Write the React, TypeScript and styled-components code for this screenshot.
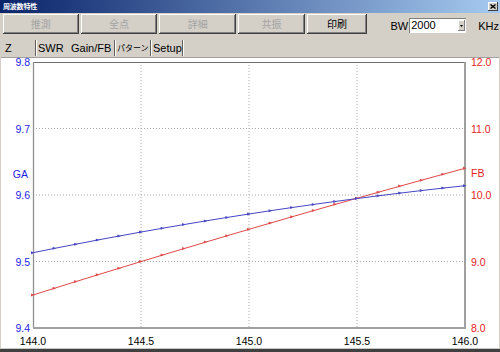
import React from 'react';
import styled, { createGlobalStyle } from 'styled-components';

const Global = createGlobalStyle`
  html, body { margin: 0; padding: 0; background: #d4d0c8; }
  body {
    width: 500px; height: 352px; overflow: hidden;
    font-family: "Liberation Sans", Arial, sans-serif;
  }
`;

const Window = styled.div`
  width: 500px;
  height: 352px;
  box-sizing: border-box;
  display: flex;
  flex-direction: column;
  background: #d4d0c8;
  border-bottom: 3px solid #404040;
  overflow: hidden;
`;

const TitleBar = styled.div`
  height: 13px;
  flex: none;
  display: flex;
  align-items: center;
  justify-content: space-between;
  padding: 0 2px 0 3px;
  background: linear-gradient(to right, #0a246a, #a6caf0);
`;

const Title = styled.span`
  color: #fff;
  font: bold 7px/1 "Noto Sans CJK JP", sans-serif;
  letter-spacing: -0.2px;
`;

const CloseButton = styled.div`
  width: 10px;
  height: 9px;
  display: flex;
  align-items: center;
  justify-content: center;
  background: #d4d0c8;
  box-shadow: inset -1px -1px #404040, inset 1px 1px #fff;
`;

const Toolbar = styled.div`
  height: 25px;
  flex: none;
  display: flex;
  align-items: flex-start;
  gap: 2px;
  padding: 1px 0 0 3px;
  box-sizing: border-box;
`;

const ToolButton = styled.div<{ $w: number; $disabled?: boolean }>`
  width: ${(p) => p.$w}px;
  height: 20px;
  box-sizing: border-box;
  display: flex;
  align-items: center;
  justify-content: center;
  background: #d4d0c8;
  box-shadow: inset -1px -1px #404040, inset 1px 1px #fff, inset -2px -2px #808080;
  font: 10px/1 "Noto Sans CJK JP", sans-serif;
  color: ${(p) => (p.$disabled ? '#a4a4a4' : '#000')};
`;

const BwGroup = styled.div`
  margin-left: 21px;
  margin-top: 4px;
  display: flex;
  align-items: center;
  height: 15px;
`;

const FieldLabel = styled.span<{ $ml?: number }>`
  font-size: 11px;
  color: #000;
  margin-left: ${(p) => p.$ml ?? 0}px;
  margin-right: 1px;
`;

const Combo = styled.div`
  width: 58px;
  height: 15px;
  box-sizing: border-box;
  display: flex;
  background: #fff;
  box-shadow: inset 1px 1px #808080, inset -1px -1px #fff;
  border-right: 1px solid #d4d0c8;
`;

const ComboText = styled.span`
  flex: 1;
  font-size: 11px;
  line-height: 15px;
  padding-left: 2px;
`;

const ComboArrow = styled.div`
  width: 7px;
  margin: 2px 1px 2px 0;
  display: flex;
  align-items: center;
  justify-content: center;
  background: #d4d0c8;
  box-shadow: inset -1px -1px #808080, inset 1px 1px #fff;
`;

const TabRow = styled.div`
  height: 16px;
  flex: none;
  margin-top: 2px;
  display: flex;
  padding-left: 3px;
`;

const Tab = styled.div<{ $w: number; $sep?: boolean; $jp?: boolean }>`
  width: ${(p) => p.$w}px;
  box-sizing: border-box;
  padding: 0 0 0 2px;
  height: 16px;
  line-height: 16px;
  font-size: ${(p) => (p.$jp ? '8px' : '11px')};
  font-family: ${(p) =>
    p.$jp ? '"Noto Sans CJK JP", sans-serif' : '"Liberation Sans", Arial, sans-serif'};
  color: #000;
  white-space: nowrap;
  border-right: 1px solid ${(p) => (p.$sep ? '#606060' : 'transparent')};
  box-shadow: ${(p) => (p.$sep ? '1px 0 #fff' : 'none')};
`;

const Panel = styled.div`
  flex: 1;
  margin: 1px 1px 0;
  background: #fff;
  border-top: 1px solid #a0a0a0;
  border-bottom: 1px solid #c8c8c8;
  overflow: visible;
`;

const ChartSvg = styled.svg`
  display: block;
  overflow: visible;
  font-family: "Liberation Sans", Arial, sans-serif;
  font-size: 10.5px;
`;

const X0 = 33;
const X1 = 465;
const Y0 = 62;
const Y1 = 328;

const N = 20;
const pts = Array.from({ length: N + 1 }, (_, i) => {
  const t = i / N;
  return {
    x: X0 + (X1 - X0) * t,
    blue: 252.7 - 87.8 * t + 20.8 * t * t,
    red: 295 - 136 * t + 9.3 * t * t,
  };
});

const gridY = [128.5, 195, 261.5];
const gridX = [141, 249, 357];

const leftLabels = [
  { y: 62, t: '9.8' },
  { y: 128.5, t: '9.7' },
  { y: 195, t: '9.6' },
  { y: 261.5, t: '9.5' },
  { y: 328, t: '9.4' },
];
const rightLabels = [
  { y: 62, t: '12.0' },
  { y: 128.5, t: '11.0' },
  { y: 195, t: '10.0' },
  { y: 261.5, t: '9.0' },
  { y: 328, t: '8.0' },
];
const bottomLabels = [
  { x: 33, t: '144.0' },
  { x: 141, t: '144.5' },
  { x: 249, t: '145.0' },
  { x: 357, t: '145.5' },
  { x: 465, t: '146.0' },
];

function Marker({ x, y, color }: { x: number; y: number; color: string }) {
  return (
    <polygon
      points={`${x - 2},${y - 1.5} ${x + 1.5},${y} ${x - 2},${y + 1.5}`}
      fill={color}
    />
  );
}

function Chart() {
  const blue = '#4646c4';
  const red = '#e04848';
  return (
    <ChartSvg width={498} height={290} viewBox="1 58 498 290">
      {gridY.map((y) => (
        <line key={'gy' + y} x1={X0} x2={X1} y1={y} y2={y} stroke="#a8a8a8" strokeDasharray="1 2" />
      ))}
      {gridX.map((x) => (
        <line key={'gx' + x} x1={x} x2={x} y1={Y0} y2={Y1} stroke="#a8a8a8" strokeDasharray="1 2" />
      ))}
      <line x1={X0} x2={X1} y1={Y0 + 0.5} y2={Y0 + 0.5} stroke="#707070" />
      <line x1={X0 + 0.5} x2={X0 + 0.5} y1={Y0} y2={Y1} stroke="#909090" strokeWidth={1.3} />
      <line x1={X1} x2={X1} y1={Y0} y2={Y1 + 1} stroke="#a0a0a0" strokeWidth={2} />
      <line x1={X0} x2={X1 + 1} y1={Y1} y2={Y1} stroke="#a0a0a0" strokeWidth={2} />

      <polyline points={pts.map((p) => `${p.x},${p.red}`).join(' ')} fill="none" stroke={red} strokeWidth={1} />
      <polyline points={pts.map((p) => `${p.x},${p.blue}`).join(' ')} fill="none" stroke={blue} strokeWidth={1} />
      {pts.map((p, i) => (
        <Marker key={'r' + i} x={p.x} y={p.red} color={red} />
      ))}
      {pts.map((p, i) => (
        <Marker key={'b' + i} x={p.x} y={p.blue} color={blue} />
      ))}

      {leftLabels.map((l) => (
        <text key={'l' + l.t} x={30} y={l.y + 4} textAnchor="end" fill="#1e1ee6">
          {l.t}
        </text>
      ))}
      <text x={28} y={178} textAnchor="end" fill="#1e1ee6">GA</text>
      {rightLabels.map((l) => (
        <text key={'r' + l.t} x={471} y={l.y + 4} fill="#e61e1e">
          {l.t}
        </text>
      ))}
      <text x={471} y={177} fill="#e61e1e">FB</text>
      {bottomLabels.map((l) => (
        <text key={'x' + l.t} x={l.x} y={345} textAnchor="middle" fill="#000">
          {l.t}
        </text>
      ))}
    </ChartSvg>
  );
}

export default function App() {
  return (
    <>
      <Global />
      <Window>
        <TitleBar>
          <Title>周波数特性</Title>
          <CloseButton>
            <svg width="6" height="5" viewBox="0 0 6 5">
              <path d="M0.5 0.5 L5.5 4.5 M5.5 0.5 L0.5 4.5" stroke="#000" strokeWidth="1.4" />
            </svg>
          </CloseButton>
        </TitleBar>
        <Toolbar>
          <ToolButton $w={76} $disabled>推測</ToolButton>
          <ToolButton $w={77} $disabled>全点</ToolButton>
          <ToolButton $w={77} $disabled>詳細</ToolButton>
          <ToolButton $w={67} $disabled>共振</ToolButton>
          <ToolButton $w={61}>印刷</ToolButton>
          <BwGroup>
            <FieldLabel>BW</FieldLabel>
            <Combo>
              <ComboText>2000</ComboText>
              <ComboArrow>
                <svg width="3" height="2" viewBox="0 0 3 2">
                  <path d="M0 0 H3 L1.5 2 Z" fill="#000" />
                </svg>
              </ComboArrow>
            </Combo>
            <FieldLabel $ml={11}>KHz</FieldLabel>
          </BwGroup>
        </Toolbar>
        <TabRow>
          <Tab $w={33} $sep>Z</Tab>
          <Tab $w={33}>SWR</Tab>
          <Tab $w={46} $sep>Gain/FB</Tab>
          <Tab $w={36} $sep $jp>パターン</Tab>
          <Tab $w={32} $sep>Setup</Tab>
        </TabRow>
        <Panel>
          <Chart />
        </Panel>
      </Window>
    </>
  );
}
